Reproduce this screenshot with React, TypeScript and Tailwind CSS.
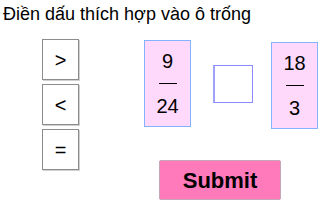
import React from 'react';

const signs = ['>', '<', '='];

const Fraction: React.FC<{ top: string; bottom: string; className?: string }> = ({ top, bottom, className }) => {
  return (
    <div
      className={
        'w-[47px] h-[87px] bg-[#ffd9fb] border border-[#85b2ff] flex flex-col items-center pt-[9px] text-[20px] leading-[22px] text-black ' +
        (className || '')
      }
    >
      <div>{top}</div>
      <div className="w-[18px] h-px bg-black mt-[11px]"></div>
      <div className="mt-[11px]">{bottom}</div>
    </div>
  );
};

const App: React.FC = () => {
  return (
    <div className="w-[328px] h-[205px] bg-white font-['Liberation_Sans',Arial,sans-serif] text-black overflow-hidden">
      {/* Title */}
      <p className="pl-[3px] pt-[4px] text-[18px] leading-[20px]">Điền dấu thích hợp vào ô trống</p>

      <div className="flex items-start mt-[15px]">
        {/* Signs */}
        <div className="ml-[42px] flex flex-col gap-[4px]">
          {signs.map((s) => (
            <div
              key={s}
              className="w-[37px] h-[41px] border border-[#8c8c8c] shadow-[1px_1px_0_#d0d0d0] flex items-center justify-center text-[20px]"
            >
              {s}
            </div>
          ))}
        </div>

        {/* Comparison */}
        <div className="ml-[65px] flex flex-col">
          <div className="flex items-start">
            <Fraction top="9" bottom="24" className="mt-[1px]" />
            <div className="ml-[22px] mt-[26px] w-[40px] h-[38px] bg-white border border-[#8a8aff] border-l-2 border-l-[#a0a0ff]"></div>
            <Fraction top="18" bottom="3" className="ml-[18px] mt-[3px]" />
          </div>
          <button className="ml-[15px] mt-[31px] w-[122px] h-[40px] bg-[#ff7abb] border border-[#c9a5b8] rounded-[2px] text-[22px] font-bold">
            Submit
          </button>
        </div>
      </div>
    </div>
  );
};

export default App;
